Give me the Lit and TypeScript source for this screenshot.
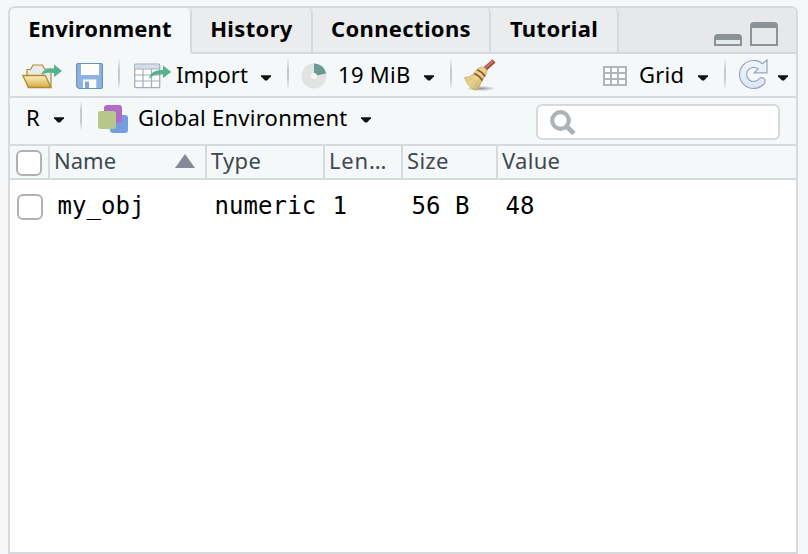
import { LitElement, html, css, svg } from "lit";
import { customElement } from "lit/decorators.js";

const caret = html`<svg class="caret" width="12" height="6" viewBox="0 0 12 6"><path d="M1 .3h10v1L7 5.500H5L1 1.300z" fill="#111"/></svg>`;

const folder = html`<svg width="40" height="26" viewBox="0 0 40 26">
  <defs><linearGradient id="f" x1="0" y1="0" x2="0" y2="1"><stop offset="0" stop-color="#fbf1c4"/><stop offset="1" stop-color="#d5ae42"/></linearGradient></defs>
  <path d="M5 13V6.500h3.500L11 2h9.500l2 4H29v18H6z" fill="#e9e9e9" stroke="#b5892f" stroke-width="1.200"/>
  <path d="M.8 12.500h22.500L29 24.500H6.500z" fill="url(#f)" stroke="#b5892f" stroke-width="1.300"/>
  <path d="M19 12C21 6.500 25 5.500 32 5.500V1.500l8 6.500-8 6v-4c-6-.5-9-.3-13 2z" fill="#52b38c"/></svg>`;

const disk = html`<svg width="28" height="28" viewBox="0 0 28 28">
  <path d="M1.600 1.500h23.800l1 1v23l-1 1H3l-2.300-2v-22z" fill="#8db3e0" stroke="#6f8fbb" stroke-width="1.200"/>
  <path d="M5 2h18v11H5zM7 17.500h13.300V26H7z" fill="#fff"/><path d="M9 19.500h4V26H9z" fill="#7fa6d5"/></svg>`;

const table = html`<svg width="38" height="26" viewBox="0 0 38 26">
  <rect x=".7" y="1.200" width="25" height="23.500" rx="1" fill="#fff" stroke="#a5acb9" stroke-width="1.300"/>
  <path d="M1.300 1.800h23.800v4H1.300z" fill="#d5dde6"/>
  <path d="M1 6h25M1 12h25M1 18h25M9 6V24.500M17.500 6V24.500" stroke="#a5acb9" stroke-width="1.200"/>
  <path d="M14.500 16.500C16.500 9 21 7 29 7V2.500l8.200 6.500-8.200 6v-3.500c-7-.3-11 .5-14.500 5z" fill="#52b38c"/></svg>`;

const memory = html`<svg width="26" height="26" viewBox="0 0 26 26"><circle cx="13" cy="13" r="12.500" fill="#e2e3e3"/>
  <path d="M13 13V.5A12.500 12.500 0 0 1 25.200 10.500z" fill="#6a9a92"/><circle cx="13" cy="13" r="3" fill="#f4f8f9"/></svg>`;

const broom = html`<svg class="broom" width="33" height="33" viewBox="0 0 33 33">
  <defs><linearGradient id="b" x1="0" y1="0" x2="1" y2="1"><stop offset="0" stop-color="#d8bf74"/><stop offset=".5" stop-color="#ead695"/><stop offset="1" stop-color="#b8954c"/></linearGradient>
  <radialGradient id="s"><stop offset="0" stop-color="#8f9494"/><stop offset="1" stop-color="#8f949400"/></radialGradient></defs>
  <ellipse cx="17" cy="29.500" rx="15" ry="2.600" fill="url(#s)"/>
  <path d="M21 10L30 1.800" stroke="#a4493f" stroke-width="4.400"/><path d="M21 9.600L29.600 1.600" stroke="#cf6f62" stroke-width="2"/>
  <path d="M.5 18.500c3.500-.2 5.800-1 8-2.800l5.500-6.200c2-1.600 5-1.800 6.700-.6 2 1.200 2.700 3 2 5l-5.700 10c-1 2-2 4.400-3.400 6.200-1.200.8-2.500.9-3.600.7C5.500 28.500 2.500 24 .5 18.500z" fill="url(#b)" stroke="#bd9b4d" stroke-width=".6"/>
  <path d="M4 22l5-3M6.500 25.500l4.500-5M9.500 28.500l4-7" stroke="#cfb266" stroke-width=".7"/>
  <path d="M10.300 14.500c3.500 1.500 6.200 3.800 8.200 7M13.300 10.800c3.500 1.500 6.200 3.800 8 6.700" fill="none" stroke="#93562b" stroke-width="1.700"/></svg>`;

const grid = html`<svg width="24" height="20" viewBox="0 0 24 20"><rect width="24" height="20" fill="#b0b5ba"/>
  ${[2, 8, 14].map((y) => [2, 9, 16].map((x) => svg`<rect x=${x} y=${y} width=${x === 16 ? 6 : 5} height="4" fill="#fff"/>`))}</svg>`;

const refresh = html`<svg class="refresh" width="30" height="31" viewBox="0 0 30 31">
  <defs><linearGradient id="r" x1="0" y1="0" x2="0" y2="1"><stop offset="0" stop-color="#eff5f9"/><stop offset="1" stop-color="#dbe6fc"/></linearGradient></defs>
  <path d="M28 1V13.800H15.200L19 10A7 7 0 1 0 19.800 20.200C21.500 18 24 18.200 25.300 19.800 26.600 21.500 26 23.500 24.800 25A14 14 0 1 1 23.600 4.800z" fill="url(#r)" stroke="#9ba5b8" stroke-width="1.200"/></svg>`;

const scope = html`<svg width="30" height="28" viewBox="0 0 30 28">
  <rect x="12" y="10" width="18" height="18" rx="3" fill="#749edf"/><rect x="6" width="18" height="18" rx="3" fill="#b06dc4"/>
  <rect y="6" width="18" height="18" rx="3" fill="#b6c78a"/></svg>`;

const glass = html`<svg width="27" height="26" viewBox="0 0 27 26"><circle cx="10.500" cy="10.500" r="8.300" fill="none" stroke="#acb2b6" stroke-width="4.200"/>
  <path d="M16.500 16.500l7.500 7" stroke="#acb2b6" stroke-width="5"/></svg>`;

@customElement("app-root")
export class AppRoot extends LitElement {
  static styles = css`
    :host { display: block; box-sizing: border-box; width: 808px; height: 554px; padding: 6px 10px 0 8px; background: #f5f7f9; overflow: hidden;
      font: 22px/30px "Noto Sans", sans-serif; color: #000; }
    * { box-sizing: border-box; }
    svg { display: block; flex: none; }
    .panel { width: 790px; height: 548px; border: 2px solid #d6dadc; border-radius: 7px 7px 0 0; background: #fff; overflow: hidden; }
    .tabs { display: flex; height: 46px; background: #e6e8ea; }
    .tab { height: 46px; padding-top: 5px; border-right: 2px solid #d6dadc; border-bottom: 2px solid #d6dadc; background: #ebecee; font-weight: 700; text-align: center; white-space: nowrap; border-top-right-radius: 5px; letter-spacing: 0.35px; }
    .tab.active { background: #f4f8f9; border-bottom-color: #f4f8f9; }
    .env { width: 182px; letter-spacing: 0.18px; } .hist { width: 121px; } .conn { width: 178px; } .tut { width: 128px; }
    .window { flex: 1; display: flex; align-items: flex-end; gap: 8px; padding: 0 18px 6px 95px; border-bottom: 2px solid #d6dadc; }
    .min, .max { width: 28px; border: 2px solid #8b9397; border-top-width: 6px; border-radius: 4px 4px 0 0; }
    .min { height: 12px; } .max { height: 24px; }
    .bar { display: flex; align-items: center; background: #f4f8f9; border-bottom: 2px solid #d6dadc; white-space: nowrap; }
    .tools { height: 44px; padding-top: 2px; } .scope { height: 48px; padding-bottom: 6px; }
    .tools > span { padding-bottom: 4px; }
    .scope > span { padding-bottom: 2px; }
    .bar > * { flex: none; }
    .sep { width: 2px; height: 32px; margin-bottom: 4px; background: linear-gradient(#d6dadc00, #c6cacc 35%, #c6cacc 65%, #d6dadc00); }
    .caret { position: relative; top: 2px; }
    .broom { margin-bottom: 2px; } .refresh { margin-bottom: 3px; }
    .search { width: 244px; height: 36px; margin-top: 8px; border: 2px solid #d6dadc; border-radius: 6px; background: #fff; padding: 4px 0 0 12px; }
    .head { display: flex; height: 34px; background: #f4f8f9; border-bottom: 2px solid #d6dadc; color: #3f484e; }
    .cell { border-right: 2px solid #d6dadc; padding-left: 4px; line-height: 28px; white-space: nowrap; letter-spacing: 0.3px; }
    .cell:last-child { border: 0; }
    .check { width: 26px; height: 26px; border: 2px solid #b1b1b1; border-radius: 6px; background: #fff; }
    .name { display: flex; align-items: flex-start; justify-content: space-between; padding-right: 10px; letter-spacing: 0; }
    .name svg { margin-top: 8px; }
    .c0 { width: 40px; padding: 4px 0 0 6px; } .c1 { width: 157px; } .c2 { width: 118px; } .c3 { width: 78px; letter-spacing: 0.8px; } .c4 { width: 95px; }
    .row { display: flex; align-items: center; height: 54px; padding-left: 7px; font: 24px/30px "DejaVu Sans Mono", monospace; letter-spacing: 0.08px; white-space: pre; }
    .row span { padding-bottom: 2px; }
    .v0 { width: 157px; margin-left: 14.5px; } .v1 { width: 118px; } .v2 { width: 79px; } .v3 { width: 94px; }
    .w-import { width: 84px; margin-left: 4px; } .w-mib { width: 85px; margin-left: 11px; letter-spacing: 0.3px; } .w-grid { width: 58px; margin-left: 12px; letter-spacing: 0.2px; }
    .w-r { width: 27px; margin-left: 16px; } .w-global { width: 222px; margin-left: 10px; letter-spacing: 0.25px; }
    .g12 { margin-left: 12px; } .g13 { margin-left: 13px; } .g14 { margin-left: 14px; } .g15 { margin-left: 15px; } .g16 { margin-left: 16px; }
    .icon-scope { padding-top: 2px; }
    .grid-at { margin-left: 106px; } .search-at { margin-left: 164px; }
    .disk { margin-left: 14px; } .drop { margin-left: 8px; }
  `;

  render() {
    return html`<div class="panel">
      <div class="tabs">
        <div class="tab env active"><span>Environment</span></div><div class="tab hist"><span>History</span></div>
        <div class="tab conn"><span>Connections</span></div><div class="tab tut"><span>Tutorial</span></div>
        <div class="window"><div class="min"></div><div class="max"></div></div>
      </div>
      <div class="bar tools">
        <div class="g12">${folder}</div><div class="disk">${disk}</div><div class="sep g14"></div>
        <div class="g14">${table}</div><span class="w-import">Import</span>${caret}
        <div class="sep g15"></div><div class="g12">${memory}</div><span class="w-mib">19 MiB</span>${caret}
        <div class="sep g15"></div><div class="g12">${broom}</div>
        <div class="grid-at">${grid}</div><span class="w-grid">Grid</span>${caret}
        <div class="sep g15"></div><div class="g13">${refresh}</div><div class="drop">${caret}</div>
      </div>
      <div class="bar scope">
        <span class="w-r">R</span>${caret}<div class="sep g15"></div><div class="g16 icon-scope">${scope}</div>
        <span class="w-global">Global Environment</span>${caret}
        <div class="search search-at">${glass}</div>
      </div>
      <div class="head">
        <div class="cell c0"><div class="check"></div></div>
        <div class="cell c1 name"><span>Name</span><svg width="20" height="14" viewBox="0 0 20 14"><path d="M0 14L10 0l10 14z" fill="#838997"/></svg></div>
        <div class="cell c2">Type</div><div class="cell c3">Len…</div><div class="cell c4">Size</div><div class="cell">Value</div>
      </div>
      <div class="row"><div class="check"></div><span class="v0">my_obj</span><span class="v1">numeric</span><span class="v2">1</span><span class="v3">56 B</span><span>48</span></div>
    </div>`;
  }
}
